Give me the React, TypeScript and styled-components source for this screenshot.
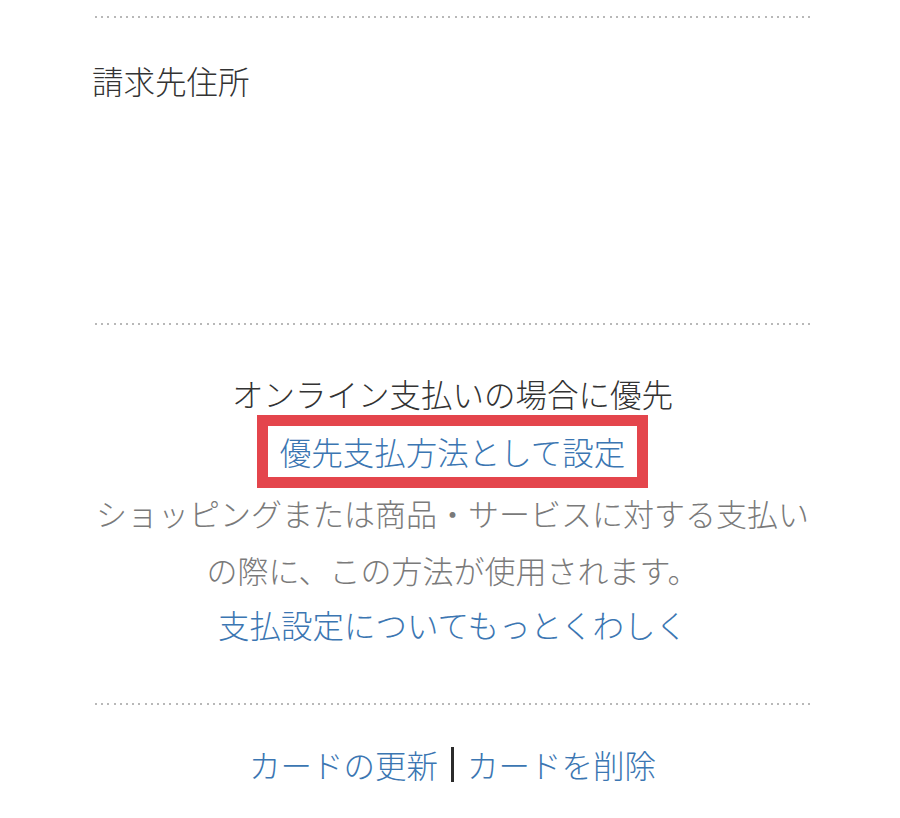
import React from 'react';
import styled, { createGlobalStyle } from 'styled-components';

const GlobalStyle = createGlobalStyle`
  body {
    margin: 0;
    background: #ffffff;
    font-family: "Noto Sans CJK JP", "Noto Sans", sans-serif;
  }
`;

const Page = styled.div`
  width: 721px;
  padding: 16px 0 0 92px;
  font-size: 31.5px;
  font-weight: 300;
  color: #333333;
`;

const Divider = styled.div`
  height: 2px;
  margin: 0 3px;
  background-image: repeating-linear-gradient(
    to right,
    #b8b8b8 0 2px,
    transparent 2px 6.2px
  );
`;

const AddressSection = styled.section`
  padding: 40px 0 221px;
`;

const SectionTitle = styled.h2`
  margin: 0;
  font-size: 31.5px;
  font-weight: 300;
  line-height: 44px;
  color: #333333;
`;

const PreferSection = styled.section`
  padding: 46px 0 52px;
  text-align: center;
`;

const Heading = styled.div`
  line-height: 44px;
  color: #333333;
`;

const Link = styled.a`
  color: #3b76b2;
  text-decoration: none;
  cursor: pointer;
`;

const Highlight = styled.div`
  display: inline-block;
  border: 11px solid #e4454c;
  padding: 0 12px;
  line-height: 51px;
`;

const Description = styled.p`
  margin: -4px 0 0;
  font-size: 31px;
  line-height: 57px;
  color: #7a7a7a;
`;

const MoreLink = styled(Link)`
  display: block;
  line-height: 53px;
`;

const Actions = styled.div`
  display: flex;
  justify-content: center;
  align-items: center;
  padding-top: 37px;
  line-height: 44px;
`;

const Bar = styled.span`
  display: inline-block;
  width: 3px;
  height: 35px;
  margin: 0 13px;
  background: #2b2b2b;
`;

export default function App() {
  return (
    <>
      <GlobalStyle />
      <Page>
        <Divider />
        <AddressSection>
          <SectionTitle>請求先住所</SectionTitle>
        </AddressSection>
        <Divider />
        <PreferSection>
          <Heading>オンライン支払いの場合に優先</Heading>
          <Highlight>
            <Link>優先支払方法として設定</Link>
          </Highlight>
          <Description>
            ショッピングまたは商品・サービスに対する支払いの際に、この方法が使用されます。
          </Description>
          <MoreLink>支払設定についてもっとくわしく</MoreLink>
        </PreferSection>
        <Divider />
        <Actions>
          <Link>カードの更新</Link>
          <Bar />
          <Link>カードを削除</Link>
        </Actions>
      </Page>
    </>
  );
}
